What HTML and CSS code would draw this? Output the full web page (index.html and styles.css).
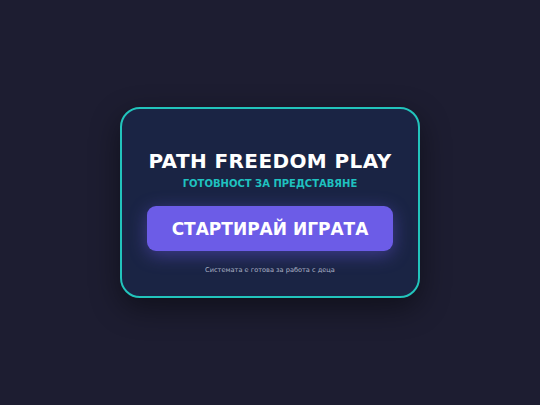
FILE: index.html
```html
<!DOCTYPE html>
<html lang="bg">
<head>
<meta charset="utf-8">
<link rel="stylesheet" href="styles.css">
</head>
<body>
<main class="stage">
  <section class="card">
    <h1 class="title">PATH FREEDOM PLAY</h1>
    <p class="status">ГОТОВНОСТ ЗА ПРЕДСТАВЯНЕ</p>
    <button class="start">СТАРТИРАЙ ИГРАТА</button>
    <p class="note">Системата е готова за работа с деца</p>
  </section>
</main>
</body>
</html>
```
FILE: styles.css
```css
html, body {
  margin: 0;
  padding: 0;
  height: 100%;
}
body {
  background: #1d1d31;
  font-family: "DejaVu Sans", sans-serif;
}
.stage {
  height: 100%;
  display: flex;
  align-items: center;
  justify-content: center;
}
.card {
  box-sizing: border-box;
  width: 300px;
  height: 191px;
  background: #1a2444;
  border: 2px solid #22c4bc;
  border-radius: 20px;
  box-shadow: 0 10px 30px rgba(0,0,0,0.45);
  display: flex;
  flex-direction: column;
  align-items: center;
  padding-top: 40px;
}
.title {
  margin: 0;
  color: #ffffff;
  font-size: 20px;
  font-weight: bold;
  line-height: 24px;
  letter-spacing: 0.4px;
}
.status {
  margin: 4px 0 0;
  color: #1fc2c0;
  font-size: 10px;
  font-weight: bold;
  line-height: 13px;
}
.start {
  margin-top: 16px;
  width: 246px;
  height: 45px;
  border: 0;
  border-radius: 9px;
  background: #6c5ce7;
  color: #ffffff;
  font-family: "DejaVu Sans", sans-serif;
  font-size: 17px;
  font-weight: bold;
  box-shadow: 0 4px 18px rgba(108,92,231,0.45);
}
.note {
  margin: 15px 0 0;
  color: #a9b0c4;
  font-size: 6.6px;
  line-height: 9px;
}
```
